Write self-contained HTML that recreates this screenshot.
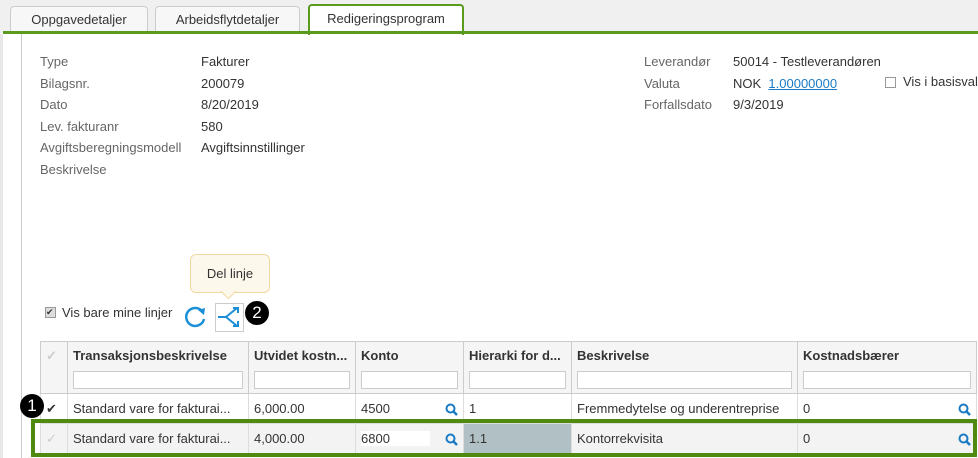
<!DOCTYPE html><html><head><style>
body{margin:0;width:978px;height:458px;overflow:hidden;background:#fff;font-family:"Liberation Sans",Arial,sans-serif;font-size:13px;color:#333;position:relative}
.a{position:absolute;white-space:nowrap}
.tab{position:absolute;top:6px;height:26px;background:#f7f7f7;border:1px solid #ccc;border-bottom:none;border-radius:4px 4px 0 0;text-align:center;line-height:25px;font-size:13px;color:#333}
.lbl{color:#666}
table{border-collapse:collapse;position:absolute;left:40px;top:341px;table-layout:fixed}
td,th{border:1px solid #ddd;padding:0 5px;height:29px;font-size:13px;text-align:left;white-space:nowrap;overflow:hidden}
th{font-weight:bold;vertical-align:top;padding-top:6px;height:45px;background:#f5f5f5;border-color:#ccc}
th .f{display:block;height:16px;border:1px solid #ccc;background:#fff;margin-top:8px}
.q{float:right;margin-top:2px}
.num{position:absolute;width:24px;height:24px;border-radius:50%;background:#000;color:#fff;text-align:center;line-height:24px;font-size:17px}
</style></head><body>
<div class="a" style="left:0;top:0;width:978px;height:33px;background:#f0f0f0"></div>
<div class="tab" style="left:10px;width:136px">Oppgavedetaljer</div>
<div class="tab" style="left:155px;width:143px">Arbeidsflytdetaljer</div>
<div class="tab" style="left:308px;width:152px;background:#fff;border:2px solid #5a9a1e;border-bottom:none;top:4px;height:29px">Redigeringsprogram</div>
<div class="a" style="left:3px;top:31px;width:975px;height:3px;background:#5a9a1e"></div>
<div class="a" style="left:21px;top:34px;width:1px;height:424px;background:#ccc"></div>
<div class="a" style="left:0;top:34px;width:3px;height:424px;background:#e8e8e8"></div>
<div class="a lbl" style="left:40px;top:51px;line-height:21.5px">Type<br>Bilagsnr.<br>Dato<br>Lev. fakturanr<br>Avgiftsberegningsmodell<br>Beskrivelse</div>
<div class="a" style="left:201px;top:51px;line-height:21.5px">Fakturer<br>200079<br>8/20/2019<br>580<br>Avgiftsinnstillinger</div>
<div class="a lbl" style="left:644px;top:51px;line-height:21.5px">Leverandør<br>Valuta<br>Forfallsdato</div>
<div class="a" style="left:733px;top:51px;line-height:21.5px">50014 - Testleverandøren<br>NOK &nbsp;<span style="color:#1a7bc4;text-decoration:underline">1.00000000</span><br>9/3/2019</div>
<div class="a" style="left:885px;top:77px;width:9px;height:9px;border:1px solid #999"></div>
<div class="a" style="left:903px;top:74px">Vis i basisvalu</div>
<div class="a" style="left:190px;top:254px;width:78px;height:37px;background:#fdf8ec;border:1px solid #f0d8a0;border-radius:6px;text-align:center;line-height:37px">Del linje</div>
<div class="a" style="left:223px;top:286px;width:10px;height:10px;background:#fdf8ec;border-right:1px solid #f0d8a0;border-bottom:1px solid #f0d8a0;transform:rotate(45deg)"></div>
<div class="a" style="left:45px;top:307px;width:9px;height:9px;border:1px solid #999;background:#ddd;font-size:9px;line-height:9px">✔</div>
<div class="a" style="left:62px;top:305px">Vis bare mine linjer</div>
<svg class="a" style="left:184px;top:305px" width="24" height="24" viewBox="0 0 24 24"><path d="M18 6 A9 9 0 1 0 20 14" fill="none" stroke="#1a8fd8" stroke-width="2.5"/><path d="M14 5 L21 3 L20 10 Z" fill="#1a8fd8"/></svg>
<div class="a" style="left:215px;top:303px;width:27px;height:27px;border:1px solid #ccc;background:#fff"></div>
<svg class="a" style="left:216px;top:304px" width="27" height="27" viewBox="0 0 27 27"><path d="M2 13 H10 L21 4 M10 13 L21 22 M17 4 H22 V9 M17 22 H22 V17" fill="none" stroke="#1a8fd8" stroke-width="2"/></svg>
<div class="num" style="left:245px;top:301px">2</div>
<table>
<colgroup><col style="width:27px"><col style="width:181px"><col style="width:107px"><col style="width:108px"><col style="width:108px"><col style="width:226px"><col style="width:179px"></colgroup>
<tr><th style="color:#ccc">✓</th><th>Transaksjonsbeskrivelse<span class="f"></span></th><th>Utvidet kostn...<span class="f"></span></th><th>Konto<span class="f"></span></th><th>Hierarki for d...<span class="f"></span></th><th>Beskrivelse<span class="f"></span></th><th>Kostnadsbærer<span class="f"></span></th></tr>
<tr><td>✔</td><td>Standard vare for fakturai...</td><td>6,000.00</td><td>4500<svg class="q" width="13" height="13" viewBox="0 0 13 13"><circle cx="5.5" cy="5.5" r="4" fill="none" stroke="#1a7bc4" stroke-width="2"/><path d="M8.5 8.5 L12 12" stroke="#1a7bc4" stroke-width="2.5"/></svg></td><td>1</td><td>Fremmedytelse og underentreprise</td><td>0<svg class="q" width="13" height="13" viewBox="0 0 13 13"><circle cx="5.5" cy="5.5" r="4" fill="none" stroke="#1a7bc4" stroke-width="2"/><path d="M8.5 8.5 L12 12" stroke="#1a7bc4" stroke-width="2.5"/></svg></td></tr>
<tr style="background:#f3f3f3"><td style="color:#ccc">✓</td><td>Standard vare for fakturai...</td><td>4,000.00</td><td><span style="background:#fff;padding-right:40px">6800</span><svg class="q" width="13" height="13" viewBox="0 0 13 13"><circle cx="5.5" cy="5.5" r="4" fill="none" stroke="#1a7bc4" stroke-width="2"/><path d="M8.5 8.5 L12 12" stroke="#1a7bc4" stroke-width="2.5"/></svg></td><td style="background:#b0c0c4">1.1</td><td>Kontorrekvisita</td><td>0<svg class="q" width="13" height="13" viewBox="0 0 13 13"><circle cx="5.5" cy="5.5" r="4" fill="none" stroke="#1a7bc4" stroke-width="2"/><path d="M8.5 8.5 L12 12" stroke="#1a7bc4" stroke-width="2.5"/></svg></td></tr>
</table>
<div class="a" style="left:31px;top:419px;width:938px;height:30px;border:4px solid #4e8a0f"></div>
<div class="num" style="left:20px;top:394px">1</div>
</body></html>
